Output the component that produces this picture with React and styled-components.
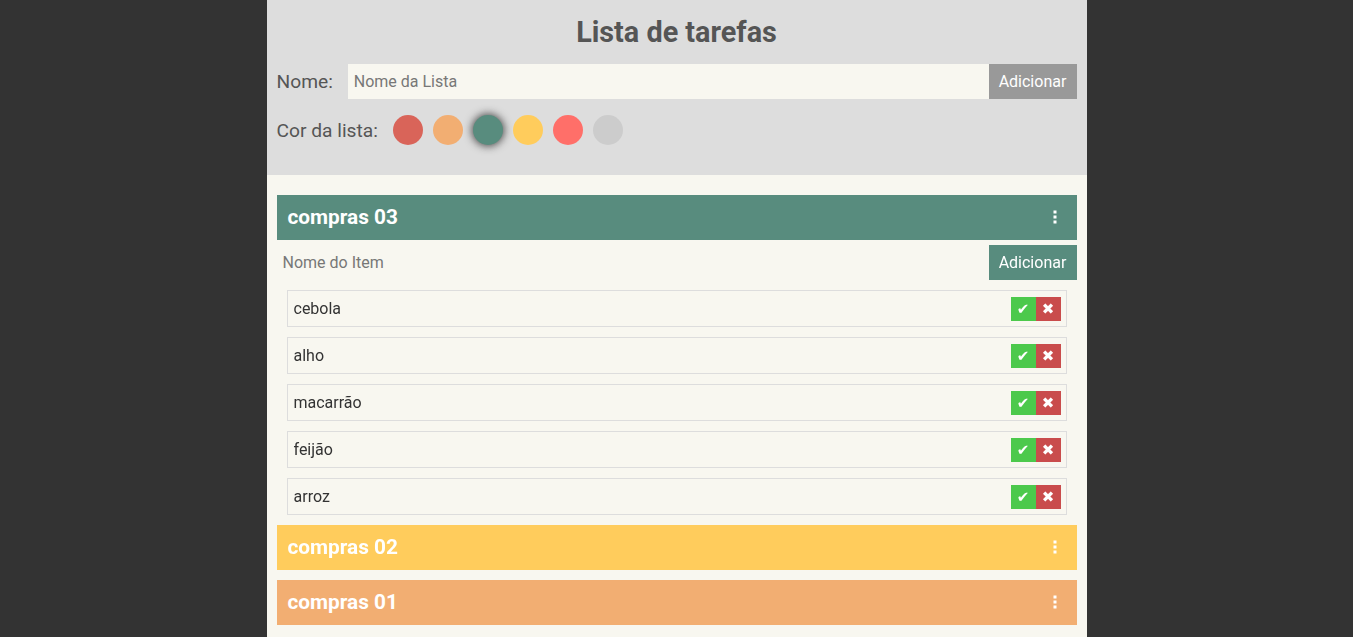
import React from "react";
import styled, { createGlobalStyle } from "styled-components";

const GlobalStyle = createGlobalStyle`
  body {
    margin: 0;
    background-color: #333333;
    font-family: Roboto, "Liberation Sans", sans-serif;
  }
  * {
    box-sizing: border-box;
  }
`;

const Page = styled.div`
  width: 820px;
  min-height: 100vh;
  margin: 0 auto;
  background-color: #f8f7f0;
`;

const Header = styled.header`
  background-color: #dddddd;
  padding: 0 10px 30px;
`;

const Title = styled.h1`
  margin: 0;
  padding: 14px 0;
  line-height: 36px;
  font-size: 28.8px;
  font-weight: bold;
  text-align: center;
  color: #555555;
`;

const Row = styled.div`
  display: flex;
  align-items: center;
  height: ${({ $h }) => $h || 35}px;
  margin-top: ${({ $mt }) => $mt || 0}px;
`;

const Label = styled.label`
  font-size: 19.2px;
  color: #555555;
  margin-right: 15px;
`;

const TextInput = styled.input`
  flex: 1;
  height: 100%;
  border: none;
  outline: none;
  padding: 0 6px;
  font-family: inherit;
  font-size: 16px;
  color: #333333;
  background-color: ${({ $bg }) => $bg || "#f8f7f0"};
  &::placeholder {
    color: #777777;
  }
`;

const AddButton = styled.button`
  width: 88px;
  height: 100%;
  border: none;
  padding: 0;
  font-family: inherit;
  font-size: 16px;
  color: #ffffff;
  background-color: ${({ $color }) => $color};
`;

const Swatches = styled.div`
  display: flex;
  gap: 10px;
`;

const Swatch = styled.span`
  width: 30px;
  height: 30px;
  border-radius: 50%;
  background-color: ${({ $color }) => $color};
  box-shadow: ${({ $active }) => ($active ? "0 0 8px 1px #444" : "none")};
`;

const Lists = styled.main`
  padding: 20px 10px 10px;
  display: flex;
  flex-direction: column;
  gap: 10px;
`;

const ListHeader = styled.div`
  height: 45px;
  display: flex;
  align-items: center;
  justify-content: space-between;
  padding: 0 20px 1px 11px;
  background-color: ${({ $color }) => $color};
`;

const ListTitle = styled.h2`
  margin: 0;
  font-size: 20.8px;
  font-weight: bold;
  color: #ffffff;
`;

const Items = styled.ul`
  list-style: none;
  margin: 0;
  padding: 10px 10px 0;
  display: flex;
  flex-direction: column;
  gap: 10px;
`;

const Item = styled.li`
  height: 37px;
  display: flex;
  align-items: center;
  justify-content: space-between;
  padding: 0 5px 0 6px;
  border: 1px solid #dddddd;
  font-size: 16px;
  color: #333333;
`;

const Actions = styled.div`
  display: flex;
`;

const ActionButton = styled.button`
  width: 25px;
  height: 24px;
  border: none;
  padding: 0;
  font-family: "DejaVu Sans", sans-serif;
  font-size: 15px;
  line-height: 24px;
  color: #ffffff;
  background-color: ${({ $kind }) => ($kind === "done" ? "#4cc94c" : "#c94c4c")};
`;

const Kebab = () => (
  <svg width="4" height="14" viewBox="0 0 4 14">
    <rect x="0.5" y="0.5" width="3" height="3" fill="#fff" />
    <rect x="0.5" y="5.5" width="3" height="3" fill="#fff" />
    <rect x="0.5" y="10.5" width="3" height="3" fill="#fff" />
  </svg>
);

const colors = ["#d96459", "#f2ae72", "#588c7e", "#ffcc5c", "#ff6f69", "#cccccc"];

const lists = [
  { name: "compras 03", color: "#588c7e", items: ["cebola", "alho", "macarrão", "feijão", "arroz"] },
  { name: "compras 02", color: "#ffcc5c", items: [] },
  { name: "compras 01", color: "#f2ae72", items: [] },
];

const App = () => {
  return (
    <>
      <GlobalStyle />
      <Page>
        <Header>
          <Title>Lista de tarefas</Title>
          <Row>
            <Label>Nome:</Label>
            <TextInput placeholder="Nome da Lista" />
            <AddButton $color="#999999">Adicionar</AddButton>
          </Row>
          <Row $h={30} $mt={16}>
            <Label>Cor da lista:</Label>
            <Swatches>
              {colors.map((c) => (
                <Swatch key={c} $color={c} $active={c === "#588c7e"} />
              ))}
            </Swatches>
          </Row>
        </Header>
        <Lists>
          {lists.map((list, i) => (
            <section key={list.name}>
              <ListHeader $color={list.color}>
                <ListTitle>{list.name}</ListTitle>
                <Kebab />
              </ListHeader>
              {i === 0 && (
                <>
                  <Row $mt={5}>
                    <TextInput placeholder="Nome do Item" $bg="transparent" autoFocus />
                    <AddButton $color={list.color}>Adicionar</AddButton>
                  </Row>
                  <Items>
                    {list.items.map((item) => (
                      <Item key={item}>
                        {item}
                        <Actions>
                          <ActionButton $kind="done">✔</ActionButton>
                          <ActionButton $kind="remove">✖</ActionButton>
                        </Actions>
                      </Item>
                    ))}
                  </Items>
                </>
              )}
            </section>
          ))}
        </Lists>
      </Page>
    </>
  );
};

export default App;
